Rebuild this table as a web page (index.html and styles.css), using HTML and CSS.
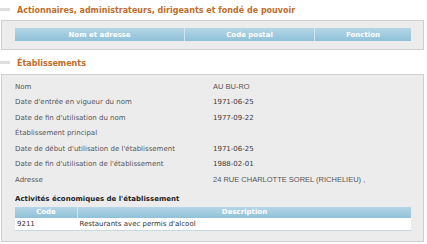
FILE: index.html
```html
<!DOCTYPE html>
<html lang="fr">
<head>
<meta charset="utf-8">
<link rel="stylesheet" href="styles.css">
</head>
<body>
<h2 class="sec-title"><span class="bar"></span>Actionnaires, administrateurs, dirigeants et fondé de pouvoir</h2>
<div class="box box-top">
  <table class="grid grid-people">
    <thead>
      <tr><th class="c1">Nom et adresse</th><th class="c2">Code postal</th><th class="c3">Fonction</th></tr>
    </thead>
  </table>
</div>
<h2 class="sec-title sec-second"><span class="bar"></span>Établissements</h2>
<div class="box box-etab">
  <dl class="fields">
    <div class="row"><dt>Nom</dt><dd class="arial">AU BU-RO</dd></div>
    <div class="row"><dt>Date d'entrée en vigueur du nom</dt><dd>1971-06-25</dd></div>
    <div class="row"><dt>Date de fin d'utilisation du nom</dt><dd>1977-09-22</dd></div>
    <div class="row"><dt>Établissement principal</dt><dd></dd></div>
    <div class="row"><dt>Date de début d'utilisation de l'établissement</dt><dd>1971-06-25</dd></div>
    <div class="row"><dt>Date de fin d'utilisation de l'établissement</dt><dd>1988-02-01</dd></div>
    <div class="row"><dt>Adresse</dt><dd class="arial">24 RUE CHARLOTTE SOREL (RICHELIEU) ,</dd></div>
  </dl>
  <h3 class="sub-title">Activités économiques de l'établissement</h3>
  <table class="grid grid-act">
    <thead>
      <tr><th class="a1">Code</th><th class="a2">Description</th></tr>
    </thead>
    <tbody>
      <tr><td>9211</td><td>Restaurants avec permis d'alcool</td></tr>
    </tbody>
  </table>
</div>
</body>
</html>
```
FILE: styles.css
```css
html, body {
  margin: 0;
  padding: 0;
  background: #ffffff;
}
body {
  font-family: "DejaVu Sans", Verdana, sans-serif;
  font-size: 7px;
  color: #444;
}
.sec-title {
  display: flex;
  align-items: center;
  margin: 0;
  height: 20px;
  font-size: 8px;
  font-weight: bold;
  color: #c06d2a;
}
.sec-title .bar {
  display: block;
  width: 10px;
  height: 3px;
  background: #dedede;
  margin-right: 7px;
  margin-bottom: 2px;
}
.sec-second {
  margin-top: 3px;
  height: 21px;
}
.box {
  margin: 0 3px 0 1px;
  border: 1px solid #cfcfcf;
  background: #edecec;
}
.box-top {
  padding: 7px 12px 8px 13px;
}
.grid {
  border-collapse: collapse;
  width: 100%;
}
.grid th {
  height: 13px;
  padding: 0;
  font-size: 7px;
  font-weight: bold;
  color: #ffffff;
  background: linear-gradient(#b4d6e6, #8fc1d8);
  text-align: center;
  border-left: 1px solid #d3e6ef;
}
.grid th:first-child {
  border-left: none;
}
.grid-people .c1 { width: 169px; }
.grid-people .c2 { width: 129px; }
.box-etab {
  padding: 4px 12px 10px 13px;
}
.fields {
  margin: 0;
}
.fields .row {
  display: flex;
  height: 15.5px;
  align-items: center;
}
.fields dt {
  width: 198px;
  color: #555;
}
.fields dd {
  margin: 0;
  color: #3a3a3a;
}
.fields .arial {
  font-family: "Liberation Sans", Arial, sans-serif;
  font-size: 7.5px;
  color: #555;
}
.sub-title {
  margin: 6px 0 2px 0;
  font-size: 7px;
  font-weight: bold;
  color: #222;
  height: 11px;
  line-height: 11px;
}
.grid-act th {
  height: 11px;
}
.grid-act .a1 { width: 62px; }
.grid-act td {
  background: #ffffff;
  height: 12px;
  padding: 0 0 0 2px;
  color: #333;
  border-bottom: 1px solid #c5d7df;
}
```
